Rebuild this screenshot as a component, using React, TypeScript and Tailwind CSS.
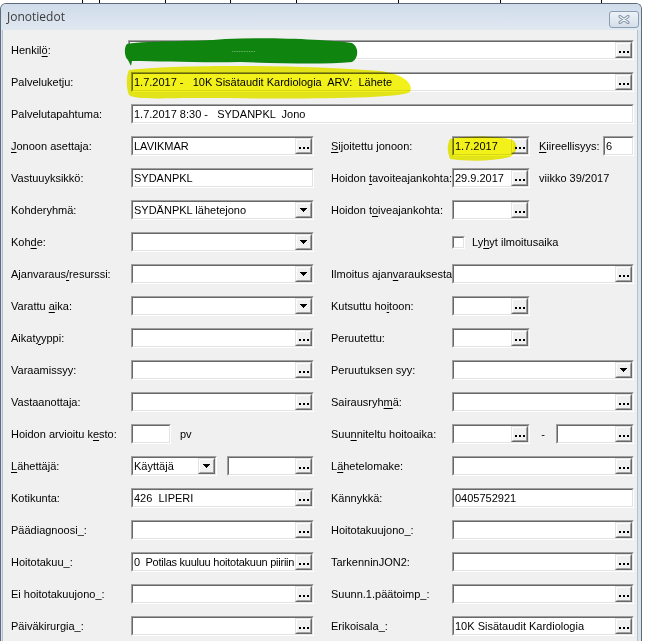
import React from "react";

const U = ({ children }: { children: React.ReactNode }) => (
  <span className="underline decoration-1 underline-offset-[2px]">{children}</span>
);

function Dots() {
  return (
    <div className="flex gap-[2px] mt-[3px]">
      <span className="w-[2px] h-[2px] bg-black" />
      <span className="w-[2px] h-[2px] bg-black" />
      <span className="w-[2px] h-[2px] bg-black" />
    </div>
  );
}

function Tri() {
  return (
    <svg width="7" height="4" viewBox="0 0 7 4" shapeRendering="crispEdges">
      <rect x="0" y="0" width="7" height="1" fill="#000" />
      <rect x="1" y="1" width="5" height="1" fill="#000" />
      <rect x="2" y="2" width="3" height="1" fill="#000" />
      <rect x="3" y="3" width="1" height="1" fill="#000" />
    </svg>
  );
}

function RaisedBtn({ children }: { children: React.ReactNode }) {
  return (
    <div className="w-[17px] h-full shrink-0 border border-t-[#e3e3e3] border-l-[#e3e3e3] border-r-[#696969] border-b-[#696969] bg-[#f0f0f0]">
      <div className="w-full h-full border border-t-white border-l-white border-r-[#a0a0a0] border-b-[#a0a0a0] flex items-center justify-center">
        {children}
      </div>
    </div>
  );
}

function Field({
  w,
  value,
  btn,
  tight,
}: {
  w: string;
  value?: string;
  btn?: "e" | "d";
  tight?: boolean;
}) {
  return (
    <div className={`${w} h-[20px] shrink-0 flex border border-t-[#a0a0a0] border-l-[#a0a0a0] border-r-white border-b-white`}>
      <div className="flex-1 flex min-w-0 border border-t-[#696969] border-l-[#696969] border-r-[#e3e3e3] border-b-[#e3e3e3] bg-white">
        <div
          className={`flex-1 min-w-0 pl-[1px] flex items-center overflow-hidden whitespace-pre text-[11px] leading-none text-black ${
            tight ? "tracking-[-0.25px]" : ""
          }`}
        >
          {value}
        </div>
        {btn === "e" && (
          <RaisedBtn>
            <Dots />
          </RaisedBtn>
        )}
        {btn === "d" && (
          <RaisedBtn>
            <Tri />
          </RaisedBtn>
        )}
      </div>
    </div>
  );
}

function L({ children }: { children: React.ReactNode }) {
  return <div className="w-[120px] shrink-0 whitespace-nowrap">{children}</div>;
}
function R({ children }: { children: React.ReactNode }) {
  return <div className="w-[121px] shrink-0 whitespace-nowrap">{children}</div>;
}
function Row({ children }: { children: React.ReactNode }) {
  return <div className="h-[32px] flex items-center">{children}</div>;
}
const Gap = () => <div className="w-[17px] shrink-0" />;

const gridLines = [83, 17, 66, 65, 66, 102, 102, 101];

export default function App() {
  return (
    <div className="w-[645px] h-[641px] overflow-hidden bg-white relative font-['Liberation_Sans',Arial,sans-serif] text-[11px] text-black">
      {/* background strip */}
      <div className="h-[3px] flex">
        {gridLines.map((w, i) => (
          <div key={i} style={{ width: w }} className="h-full border-r border-black shrink-0" />
        ))}
      </div>
      {/* window */}
      <div className="w-[642px] h-[638px] flex flex-col rounded-t-[6px] border-t border-l border-r border-[#5d6b7a] bg-[#d9e3ee] overflow-hidden">
        <div className="h-[26px] shrink-0 flex items-center justify-between pl-[6px] pr-[2px] bg-gradient-to-b from-[#d0dcea] to-[#e0e8f1]">
          <span className="font-['Open_Sans','Liberation_Sans',sans-serif] text-[12px] text-[#3b3b3b]">Jonotiedot</span>
          <div className="w-[30px] h-[17px] mt-[4px] rounded-[3px] border border-[#8b9db3] bg-gradient-to-b from-[#eef2f7] to-[#d5dfea] flex items-center justify-center">
            <svg width="12" height="9" viewBox="0 0 12 9">
              <path d="M2 1.5 L10 7.5 M10 1.5 L2 7.5" stroke="#7b8ca1" strokeWidth="3" strokeLinecap="round" />
              <path d="M2 1.5 L10 7.5 M10 1.5 L2 7.5" stroke="#f4f6f9" strokeWidth="1.2" strokeLinecap="round" />
            </svg>
          </div>
        </div>
        <div className="flex-1 ml-[1px] mr-[3px] bg-[#f0f0f0] border-l border-r border-[#b4c0cd] pl-[8px] pt-[4px]">
          <Row>
            <div className="w-[117px] shrink-0">Henkil<U>ö</U>:</div>
            <Field w="w-[506px]" btn="e" />
          </Row>
          <Row>
            <L>Palveluketju:</L>
            <Field w="w-[503px]" btn="e" value="1.7.2017 -   10K Sisätaudit Kardiologia  ARV:  Lähete" />
          </Row>
          <Row>
            <L>Palvelutapahtuma:</L>
            <Field w="w-[503px]" value="1.7.2017 8:30 -   SYDANPKL  Jono" />
          </Row>
          <Row>
            <L><U>J</U>onoon asettaja:</L>
            <Field w="w-[183px]" btn="e" value="LAVIKMAR" />
            <Gap />
            <R><U>S</U>ijoitettu jonoon:</R>
            <Field w="w-[78px]" btn="e" value="1.7.2017" />
            <div className="w-[64px] shrink-0 ml-[9px] whitespace-nowrap"><U>K</U>iireellisyys:</div>
            <Field w="w-[31px]" value="6" />
          </Row>
          <Row>
            <L>Vastuuyksikkö:</L>
            <Field w="w-[183px]" value="SYDANPKL" />
            <Gap />
            <R>Hoidon <U>t</U>avoiteajankohta:</R>
            <Field w="w-[78px]" btn="e" value="29.9.2017" />
            <div className="ml-[9px] whitespace-nowrap">viikko 39/2017</div>
          </Row>
          <Row>
            <L>Kohderyhmä:</L>
            <Field w="w-[183px]" btn="d" value="SYDÄNPKL lähetejono" />
            <Gap />
            <R>Hoidon t<U>o</U>iveajankohta:</R>
            <Field w="w-[78px]" btn="e" />
          </Row>
          <Row>
            <L>Koh<U>d</U>e:</L>
            <Field w="w-[183px]" btn="d" />
            <Gap />
            <div className="w-[121px] shrink-0" />
            <div className="w-[13px] h-[13px] shrink-0 border border-t-[#a0a0a0] border-l-[#a0a0a0] border-r-white border-b-white">
              <div className="w-full h-full border border-t-[#696969] border-l-[#696969] border-r-[#e3e3e3] border-b-[#e3e3e3] bg-white" />
            </div>
            <div className="ml-[7px] whitespace-nowrap">Ly<U>h</U>yt ilmoitusaika</div>
          </Row>
          <Row>
            <L>Ajanvaraus<U>/</U>resurssi:</L>
            <Field w="w-[183px]" btn="d" />
            <Gap />
            <R>Ilmoitus ajan<U>v</U>arauksesta:</R>
            <Field w="w-[182px]" btn="e" />
          </Row>
          <Row>
            <L>Varattu <U>a</U>ika:</L>
            <Field w="w-[183px]" btn="d" />
            <Gap />
            <R>Kutsuttu ho<U>i</U>toon:</R>
            <Field w="w-[78px]" btn="e" />
          </Row>
          <Row>
            <L>Aikat<U>y</U>yppi:</L>
            <Field w="w-[183px]" btn="e" />
            <Gap />
            <R>Peruutettu:</R>
            <Field w="w-[78px]" btn="e" />
          </Row>
          <Row>
            <L>Varaamissyy:</L>
            <Field w="w-[183px]" btn="e" />
            <Gap />
            <R>Peruutuksen syy:</R>
            <Field w="w-[182px]" btn="d" />
          </Row>
          <Row>
            <L>Vastaanottaja:</L>
            <Field w="w-[183px]" btn="e" />
            <Gap />
            <R>Sairausryh<U>m</U>ä:</R>
            <Field w="w-[182px]" btn="e" />
          </Row>
          <Row>
            <L>Hoidon arvioitu k<U>e</U>sto:</L>
            <div className="w-[183px] shrink-0 flex items-center">
              <Field w="w-[40px]" />
              <div className="ml-[9px]">pv</div>
            </div>
            <Gap />
            <R>Suu<U>n</U>niteltu hoitoaika:</R>
            <Field w="w-[78px]" btn="e" />
            <div className="w-[26px] shrink-0 text-center">-</div>
            <Field w="w-[78px]" btn="e" />
          </Row>
          <Row>
            <L><U>L</U>ähettäjä:</L>
            <div className="w-[183px] shrink-0 flex items-center">
              <Field w="w-[86px]" btn="d" value="Käyttäjä" />
              <div className="w-[10px] shrink-0" />
              <Field w="w-[87px]" btn="e" />
            </div>
            <Gap />
            <R>L<U>ä</U>hetelomake:</R>
            <Field w="w-[182px]" btn="e" />
          </Row>
          <Row>
            <L>Kotikunta:</L>
            <Field w="w-[183px]" btn="e" value="426  LIPERI" />
            <Gap />
            <R>Kännykkä:</R>
            <Field w="w-[182px]" value="0405752921" />
          </Row>
          <Row>
            <L>Päädiagnoosi_:</L>
            <Field w="w-[183px]" btn="e" />
            <Gap />
            <R>Hoitotakuujono_:</R>
            <Field w="w-[182px]" btn="e" />
          </Row>
          <Row>
            <L>Hoitotakuu_:</L>
            <Field w="w-[183px]" btn="e" tight value="0  Potilas kuuluu hoitotakuun piiriin" />
            <Gap />
            <R>TarkenninJON2:</R>
            <Field w="w-[182px]" btn="e" />
          </Row>
          <Row>
            <L>Ei hoitotakuujono_:</L>
            <Field w="w-[183px]" btn="e" />
            <Gap />
            <R>Suunn.1.päätoimp_:</R>
            <Field w="w-[182px]" btn="e" />
          </Row>
          <Row>
            <L>Päiväkirurgia_:</L>
            <Field w="w-[183px]" btn="e" />
            <Gap />
            <R>Erikoisala_:</R>
            <Field w="w-[182px]" btn="e" value="10K Sisätaudit Kardiologia" />
          </Row>
        </div>
      </div>

      {/* marker overlays */}
      <svg className="absolute inset-0 pointer-events-none mix-blend-multiply" width="645" height="641" viewBox="0 0 645 641">
        <path
          d="M129,70 C180,64 300,65 380,71 C404,74 414,84 410,92 C398,99 300,99 200,98 C160,98 136,100 129,95 C126,88 126,76 129,70 Z"
          fill="#f2f21a"
        />
        <path
          d="M450,139 C470,135 500,136 513,140 C519,146 517,152 510,157 C490,162 466,161 450,159 C447,151 447,145 450,139 Z"
          fill="#f2f21a"
        />
      </svg>
      <svg className="absolute inset-0 pointer-events-none" width="645" height="641" viewBox="0 0 645 641">
        <path
          d="M127,44 C150,40 195,42 225,39 C275,37 330,40 352,43 C359,47 359,58 352,62 C320,65 280,63 240,62 C200,63 160,61 132,61 L131,66 L128,60 C124,57 124,47 127,44 Z"
          fill="#0f840f"
        />
        <text x="232" y="52" fontSize="6" fill="#ffffff" fontFamily="Liberation Sans, sans-serif">..............</text>
      </svg>
    </div>
  );
}
